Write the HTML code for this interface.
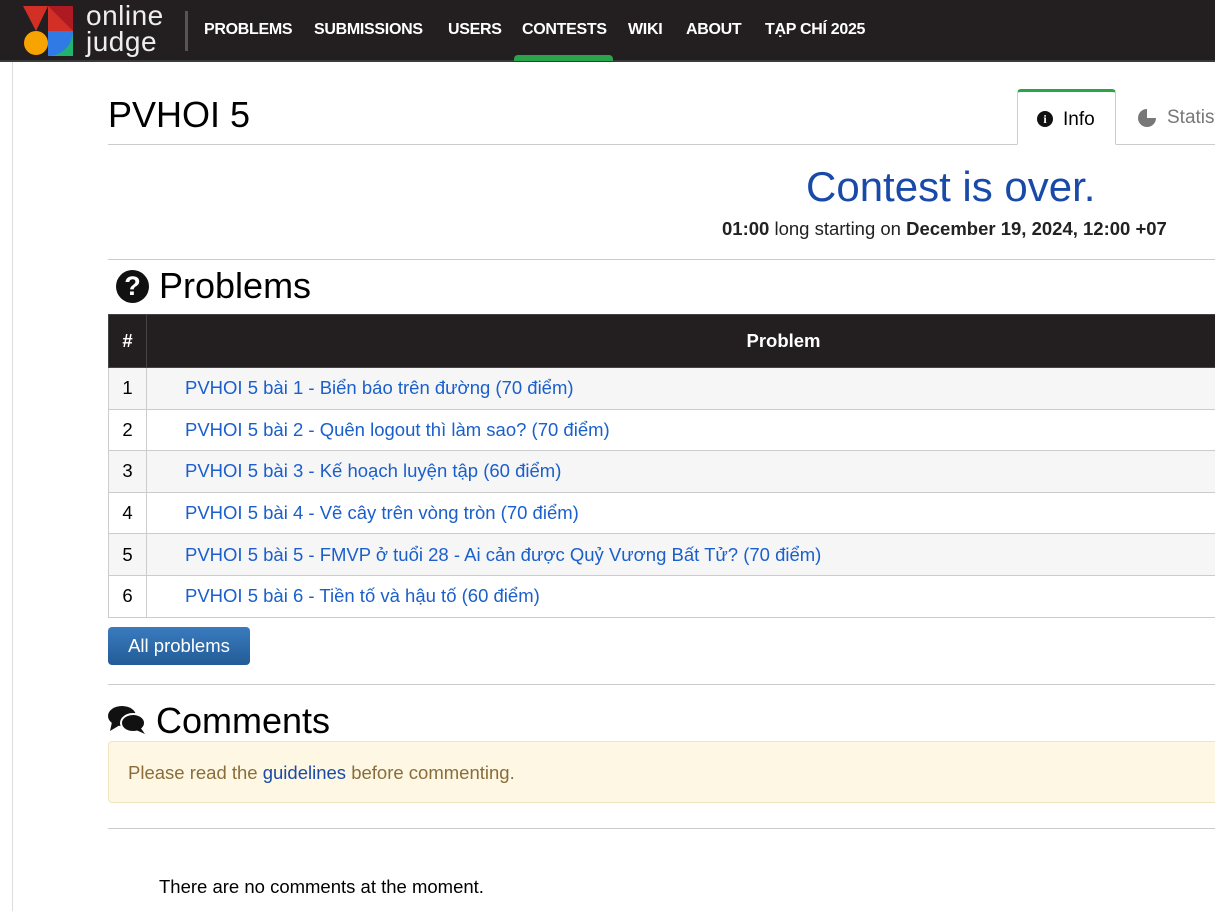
<!DOCTYPE html>
<html><head><meta charset="utf-8"><style>
*{box-sizing:border-box}
body{margin:0;width:1215px;height:911px;overflow:hidden;background:#fff;font-family:"Liberation Sans",sans-serif;color:#000}
.nav{position:absolute;left:0;top:0;width:1215px;height:62px;background:#231f20;border-bottom:2px solid #3a3a3a}
.nav .brand{position:absolute;left:86px;top:3px;color:#eee;font-size:28px;line-height:26px;letter-spacing:0.5px}
.nav .sep{position:absolute;left:185px;top:11px;width:3px;height:40px;background:#555}
.nav a{position:absolute;top:21px;color:#fff;font-size:16px;font-weight:bold;text-decoration:none;letter-spacing:-0.3px}
.nav .act{position:absolute;left:514px;top:55px;width:99px;height:6px;background:#2ba34b;border-radius:4px 4px 0 0}
.lb{position:absolute;left:12px;top:62px;width:1px;height:849px;background:#ddd}
h1{position:absolute;left:108px;top:94px;margin:0;font-weight:normal;font-size:36px}
.hr{position:absolute;left:108px;width:1107px;height:1px;background:#ccc}
.tab{position:absolute;top:89px;height:56px;font-size:18px}
.over{position:absolute;left:806px;top:163px;font-size:42px;color:#1a4aa8}
.time{position:absolute;left:722px;top:218px;font-size:18.5px;color:#222}
h2{position:absolute;margin:0;font-weight:normal;font-size:36px}
table{position:absolute;left:108px;top:314px;width:1313px;border-collapse:collapse;font-size:18.5px}
th{background:#231f20;color:#fff;height:53px;border:1px solid #444}
td{height:41.6px;border:1px solid #ccc;padding:0}
td:first-child{text-align:center;width:38px}
td a{color:#1a5fcc;text-decoration:none;margin-left:38px}
tr:nth-child(even) td{background:#f6f6f6}
.btn{position:absolute;left:108px;top:627px;width:142px;height:38px;border-radius:4px;background:linear-gradient(#3a7bbd,#235c98);color:#fff;font-size:18.5px;text-align:center;line-height:38px}
.alert{position:absolute;left:108px;top:741px;width:1120px;height:62px;background:#fdf7e3;border:1px solid #f0e5bf;border-radius:4px;color:#8a6d3b;font-size:18.5px;padding:20px 19px}
.alert a{color:#1a4aa8}
</style></head><body>
<div class="nav">
<svg style="position:absolute;left:23px;top:6px" width="51" height="50" viewBox="0 0 51 50">
<polygon points="0,0 25,0 13,25" fill="#d22f27"/>
<rect x="25" y="0" width="25" height="25" fill="#ad1a22"/>
<polygon points="25,0 50,25 25,25" fill="#d22f27"/>
<circle cx="13" cy="37" r="12" fill="#f7a300"/>
<path d="M25 25 H50 V50 H25 Z" fill="#22b46e"/>
<path d="M25 25 H50 A25 25 0 0 1 25 50 Z" fill="#2f7ae5"/>
</svg>
<div class="brand">online<br>judge</div>
<div class="sep"></div>
<a style="left:204px">PROBLEMS</a><a style="left:314px">SUBMISSIONS</a><a style="left:448px">USERS</a><a style="left:522px">CONTESTS</a><a style="left:628px">WIKI</a><a style="left:686px">ABOUT</a><a style="left:765px">TẠP CHÍ 2025</a>
<div class="act"></div>
</div>
<div class="lb"></div>
<h1>PVHOI 5</h1>
<div class="hr" style="top:144px"></div>
<div class="tab" style="left:1017px;width:99px;border:1px solid #ccc;border-bottom:1px solid #fff;border-top:3px solid #2ba34b;border-radius:4px 4px 0 0;background:#fff">
<span style="position:absolute;left:19px;top:19px;width:16px;height:16px;border-radius:50%;background:#111;color:#fff;font-size:12px;font-weight:bold;text-align:center;line-height:16px;font-family:'Liberation Serif',serif">i</span>
<span style="position:absolute;left:45px;top:17px;font-size:19px">Info</span></div>
<div class="tab" style="left:1138px;color:#777"><span style="position:absolute;left:0;top:20px;width:18px;height:18px;border-radius:50%;background:conic-gradient(#fff0 0 25%,#777 0)"></span><span style="position:absolute;left:29px;top:18px;font-size:19px">Statist</span></div>
<div class="over">Contest is over.</div>
<div class="time"><b>01:00</b> long starting on <b>December 19, 2024, 12:00 +07</b></div>
<div class="hr" style="top:259px"></div>
<h2 style="left:116px;top:265px"><span style="display:inline-block;width:33px;height:33px;border-radius:50%;background:#111;color:#fff;font-size:27px;font-weight:bold;text-align:center;line-height:33px;vertical-align:3px">?</span> Problems</h2>
<table>
<tr><th>#</th><th>Problem</th></tr>
<tr><td>1</td><td><a>PVHOI 5 bài 1 - Biển báo trên đường (70 điểm)</a></td></tr>
<tr><td>2</td><td><a>PVHOI 5 bài 2 - Quên logout thì làm sao? (70 điểm)</a></td></tr>
<tr><td>3</td><td><a>PVHOI 5 bài 3 - Kế hoạch luyện tập (60 điểm)</a></td></tr>
<tr><td>4</td><td><a>PVHOI 5 bài 4 - Vẽ cây trên vòng tròn (70 điểm)</a></td></tr>
<tr><td>5</td><td><a>PVHOI 5 bài 5 - FMVP ở tuổi 28 - Ai cản được Quỷ Vương Bất Tử? (70 điểm)</a></td></tr>
<tr><td>6</td><td><a>PVHOI 5 bài 6 - Tiền tố và hậu tố (60 điểm)</a></td></tr>
</table>
<div class="btn">All problems</div>
<div class="hr" style="top:684px"></div>
<h2 style="left:108px;top:700px"><svg width="38" height="30" viewBox="0 0 38 30" style="vertical-align:-2px"><ellipse cx="14" cy="11" rx="14" ry="10" fill="#111"/><polygon points="4,17 2,26 12,20" fill="#111"/><ellipse cx="25" cy="18" rx="12" ry="9" fill="#111" stroke="#fff" stroke-width="2"/><polygon points="32,22 37,29 28,25" fill="#111"/></svg> Comments</h2>
<div class="alert">Please read the <a>guidelines</a> before commenting.</div>
<div class="hr" style="top:828px"></div>
<div style="position:absolute;left:159px;top:876px;font-size:18.5px">There are no comments at the moment.</div>
</body></html>
